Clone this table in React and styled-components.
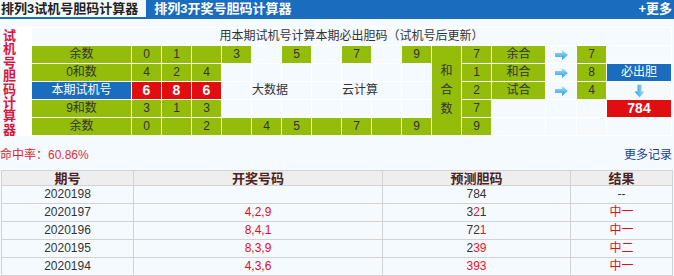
import React from 'react';
import styled, { createGlobalStyle } from 'styled-components';

const GlobalStyle = createGlobalStyle`
  body {
    margin: 0;
    background: #f5faff;
    font-family: "Liberation Sans", "Noto Sans CJK SC", sans-serif;
    font-size: 12px;
    color: #333;
  }
`;

const TabBar = styled.div`
  display: flex;
  height: 19px;
  background: #1a6cbf;
`;

const Tab = styled.div`
  padding: ${({ $active }) => ($active ? '0 8px 0 1px' : '0 8px')};
  font-size: 13px;
  font-weight: bold;
  line-height: 17px;
  color: ${({ $active }) => ($active ? '#222' : '#fff')};
  background: ${({ $active }) => ($active ? '#f5faff' : 'transparent')};
  border-bottom: 2px solid #1a6cbf;
`;

const More = styled.div`
  margin-left: auto;
  padding-right: 2px;
  font-size: 13px;
  font-weight: bold;
  line-height: 18px;
  color: #fff;
`;

const CalcGrid = styled.div`
  display: grid;
  grid-template-columns: 29px 99px repeat(10, 29px) 29px 29px 53px 30px 29px 64px;
  grid-template-rows: repeat(6, 17px);
  gap: 1px;
  padding: 1px;
  margin: 8px 0 0 1px;
  width: max-content;
  background: #fff;
`;

const Title = styled.div`
  grid-column: 1;
  grid-row: 1 / span 6;
  background: #f5faff;
  color: #d8173c;
  font-family: "Noto Sans CJK SC", sans-serif;
  font-size: 13px;
  font-weight: bold;
  line-height: 13.4px;
  padding: 0 0 0 1px;
  width: 13px;
  box-sizing: content-box;
`;

const Header = styled.div`
  grid-column: 2 / -1;
  grid-row: 1;
  background: #f5faff;
  text-align: center;
  line-height: 17px;
  color: #333;
`;

const colors = {
  green: '#94bc0b',
  blue: '#1a6cbf',
  red: '#e00e10',
  blank: '#f5faff',
};

const Cell = styled.div`
  display: flex;
  align-items: center;
  justify-content: center;
  background: ${({ $kind }) => colors[$kind || 'blank']};
  color: ${({ $kind }) => ($kind === 'blue' || $kind === 'red' ? '#fff' : '#333')};
  font-size: ${({ $kind }) => ($kind === 'red' ? '14px' : '12px')};
  font-weight: ${({ $kind }) => ($kind === 'red' ? 'bold' : 'normal')};
  line-height: 17px;
  white-space: nowrap;
`;

const OverText = styled(Cell)`
  justify-content: flex-start;
  position: relative;
  z-index: 1;
`;

const SumCol = styled(Cell)`
  grid-column: 13;
  grid-row: 2 / span 5;
  flex-direction: column;
  line-height: 19px;
`;

const Arrow = ({ down }) => (
  <svg width="13" height="10" viewBox="0 0 13 10" style={down ? { transform: 'rotate(90deg)' } : undefined}>
    <defs>
      <linearGradient id={down ? 'ad' : 'ar'} x1="0" y1="0" x2="0" y2="1">
        <stop offset="0" stopColor="#a9e1fb" />
        <stop offset="1" stopColor="#2d9be0" />
      </linearGradient>
    </defs>
    <path d="M0 3 H7 V0 L13 5 L7 10 V7 H0 Z" fill={`url(#${down ? 'ad' : 'ar'})`} />
  </svg>
);

const InfoRow = styled.div`
  display: flex;
  justify-content: space-between;
  align-items: center;
  height: 16px;
  margin: 9px 2px 9px 0;
`;

const Rate = styled.span`
  color: #d9251d;
  font-family: "Noto Sans CJK SC", sans-serif;
  b {
    font-weight: normal;
    font-family: "Liberation Sans", sans-serif;
    color: #e0303a;
  }
`;

const MoreLink = styled.span`
  color: #1d3f8f;
  font-family: "Noto Sans CJK SC", sans-serif;
`;

const History = styled.table`
  border-collapse: collapse;
  margin-left: 1px;
  width: 671px;
  table-layout: fixed;

  th,
  td {
    border: 1px solid #d3d3d3;
    text-align: center;
    padding: 0;
  }
  th {
    height: 14px;
    line-height: 14px;
    background: #eeeeee;
    color: #4a2222;
    font-size: 13px;
    font-weight: bold;
    font-family: "Noto Sans CJK SC", sans-serif;
  }
  td {
    height: 17px;
    line-height: 17px;
    font-size: 12px;
  }
`;

const Num = styled.span`
  color: ${({ $hit }) => ($hit ? '#f0102a' : '#333')};
`;

const Red = styled.span`
  color: #e0101a;
`;

const digitRows = [
  { label: '余数', kind: 'green', digits: ['0', '1', '', '3', null, '5', null, '7', null, '9'], num: '7', tag: '余合', arrow: true, res: '7', last: null },
  { label: '0和数', kind: 'green', digits: ['4', '2', '4', null, null, null, null, null, null, null], num: '1', tag: '和合', arrow: true, res: '8', last: 'must' },
  { label: '本期试机号', kind: 'blue', digits: ['6', '8', '6'], num: '2', tag: '试合', arrow: true, res: '4', last: 'down' },
  { label: '9和数', kind: 'green', digits: ['3', '1', '3', null, null, null, null, null, null, null], num: '7', tag: null, arrow: false, res: null, last: 'result' },
  { label: '余数', kind: 'green', digits: ['0', '', '2', '', '4', '5', '', '7', '', '9'], num: '9', tag: null, arrow: false, res: null, last: null },
];

const history = [
  { id: '2020198', draw: '', pred: [['7'], ['8'], ['4']], result: '--' },
  { id: '2020197', draw: '4,2,9', pred: [['3'], ['2', 1], ['1']], result: '中一' },
  { id: '2020196', draw: '8,4,1', pred: [['7'], ['2'], ['1', 1]], result: '中一' },
  { id: '2020195', draw: '8,3,9', pred: [['2'], ['3', 1], ['9', 1]], result: '中二' },
  { id: '2020194', draw: '4,3,6', pred: [['3', 1], ['9', 1], ['3', 1]], result: '中一' },
];

function DigitCells({ row }) {
  if (row.kind === 'blue') {
    const cells = row.digits.map((d, i) => <Cell key={i} $kind="red">{d}</Cell>);
    for (let i = 3; i < 10; i++) {
      if (i === 4) cells.push(<OverText key={i}>大数据</OverText>);
      else if (i === 7) cells.push(<OverText key={i}>云计算</OverText>);
      else cells.push(<Cell key={i} />);
    }
    return cells;
  }
  return row.digits.map((d, i) => (
    <Cell key={i} $kind={d === null ? 'blank' : 'green'}>{d}</Cell>
  ));
}

function LastCell({ type }) {
  if (type === 'must') return <Cell $kind="blue">必出胆</Cell>;
  if (type === 'down') return <Cell><Arrow down /></Cell>;
  if (type === 'result') return <Cell $kind="red">784</Cell>;
  return <Cell />;
}

export default function App() {
  return (
    <>
      <GlobalStyle />
      <TabBar>
        <Tab $active>排列3试机号胆码计算器</Tab>
        <Tab>排列3开奖号胆码计算器</Tab>
        <More>+更多</More>
      </TabBar>

      <CalcGrid>
        <Title>试机号胆码计算器</Title>
        <Header>用本期试机号计算本期必出胆码（试机号后更新）</Header>
        <SumCol $kind="green">
          <span>和</span>
          <span>合</span>
          <span>数</span>
        </SumCol>
        {digitRows.map((row, r) => (
          <React.Fragment key={r}>
            <Cell $kind={row.kind}>{row.label}</Cell>
            <DigitCells row={row} />
            <Cell $kind="green">{row.num}</Cell>
            <Cell $kind={row.tag ? 'green' : 'blank'}>{row.tag}</Cell>
            <Cell>{row.arrow && <Arrow />}</Cell>
            <Cell $kind={row.res ? 'green' : 'blank'}>{row.res}</Cell>
            <LastCell type={row.last} />
          </React.Fragment>
        ))}
      </CalcGrid>

      <InfoRow>
        <Rate>
          命中率：<b>60.86%</b>
        </Rate>
        <MoreLink>更多记录</MoreLink>
      </InfoRow>

      <History>
        <colgroup>
          <col style={{ width: 132 }} />
          <col style={{ width: 249 }} />
          <col style={{ width: 188 }} />
          <col style={{ width: 102 }} />
        </colgroup>
        <thead>
          <tr>
            <th>期号</th>
            <th>开奖号码</th>
            <th>预测胆码</th>
            <th>结果</th>
          </tr>
        </thead>
        <tbody>
          {history.map((h) => (
            <tr key={h.id}>
              <td>{h.id}</td>
              <td>
                <Red>{h.draw}</Red>
              </td>
              <td>
                {h.pred.map(([d, hit], i) => (
                  <Num key={i} $hit={!!hit}>{d}</Num>
                ))}
              </td>
              <td>{h.result === '--' ? h.result : <Red>{h.result}</Red>}</td>
            </tr>
          ))}
        </tbody>
      </History>
    </>
  );
}
